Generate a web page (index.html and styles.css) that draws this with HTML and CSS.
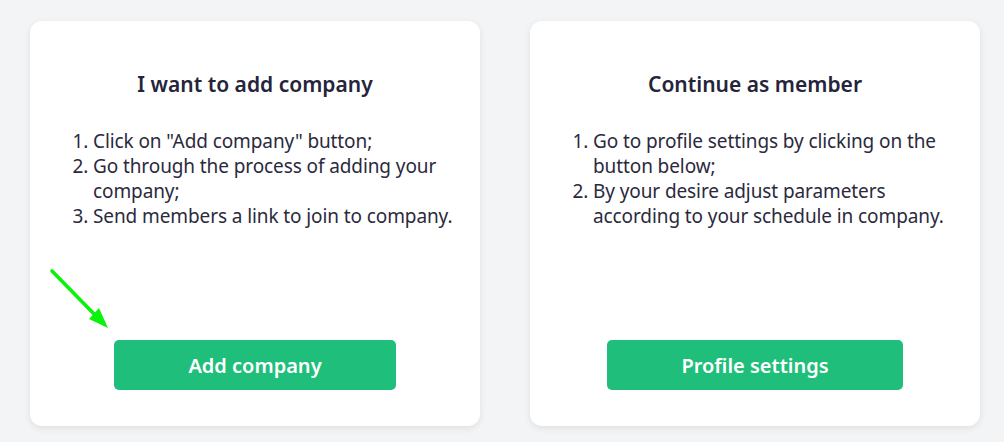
FILE: index.html
```html
<!DOCTYPE html>
<html lang="en">
<head>
<meta charset="utf-8">
<title>Choose</title>
<link rel="stylesheet" href="styles.css">
</head>
<body>
<main class="cards">
  <section class="card">
    <h2 class="card-title">I want to add company</h2>
    <ol class="steps">
      <li>Click on "Add company" button;</li>
      <li>Go through the process of adding your company;</li>
      <li>Send members a link to join to company.</li>
    </ol>
    <div class="card-action">
      <button class="btn">Add company</button>
    </div>
    <svg class="pointer" width="70" height="70" viewBox="0 0 70 70" aria-hidden="true">
      <line x1="7" y1="6" x2="52" y2="52" stroke="#0bf20b" stroke-width="3.6" stroke-linecap="round"/>
      <polygon points="63,63 44,54 54,43" fill="#0bf20b"/>
    </svg>
  </section>
  <section class="card">
    <h2 class="card-title">Continue as member</h2>
    <ol class="steps">
      <li>Go to profile settings by clicking on the button below;</li>
      <li>By your desire adjust parameters according to your schedule in company.</li>
    </ol>
    <div class="card-action">
      <button class="btn">Profile settings</button>
    </div>
  </section>
</main>
</body>
</html>
```
FILE: styles.css
```css
html, body {
  margin: 0;
  padding: 0;
}
body {
  background: #f3f4f6;
  font-family: "Noto Sans", "Open Sans", "DejaVu Sans", sans-serif;
  color: #2b2a3d;
  width: 1004px;
  height: 442px;
  overflow: hidden;
}
.cards {
  display: flex;
  gap: 50px;
  padding: 21px 0 0 30px;
}
.card {
  position: relative;
  width: 450px;
  height: 405px;
  box-sizing: border-box;
  background: #ffffff;
  border-radius: 12px;
  box-shadow: 0 2px 7px rgba(0, 0, 0, 0.09);
  padding: 0 14px 0 24px;
  display: flex;
  flex-direction: column;
}
.card-title {
  margin: 48px 0 0;
  padding-right: 10px;
  text-align: center;
  font-size: 21px;
  line-height: 30px;
  font-weight: 600;
  color: #25243a;
}
.steps {
  margin: 30px 0 0;
  padding-left: 39px;
  font-size: 19px;
  line-height: 25px;
  letter-spacing: -0.1px;
}
.card-action {
  margin-top: auto;
  padding-right: 10px;
  padding-bottom: 36px;
  display: flex;
  justify-content: center;
}
.btn {
  height: 50px;
  padding: 0 74px;
  border: 0;
  border-radius: 5px;
  background: #1fbf7b;
  color: #ffffff;
  font-family: inherit;
  font-size: 20px;
  font-weight: 600;
  cursor: pointer;
}
.pointer {
  position: absolute;
  left: 15px;
  top: 244px;
}
```
